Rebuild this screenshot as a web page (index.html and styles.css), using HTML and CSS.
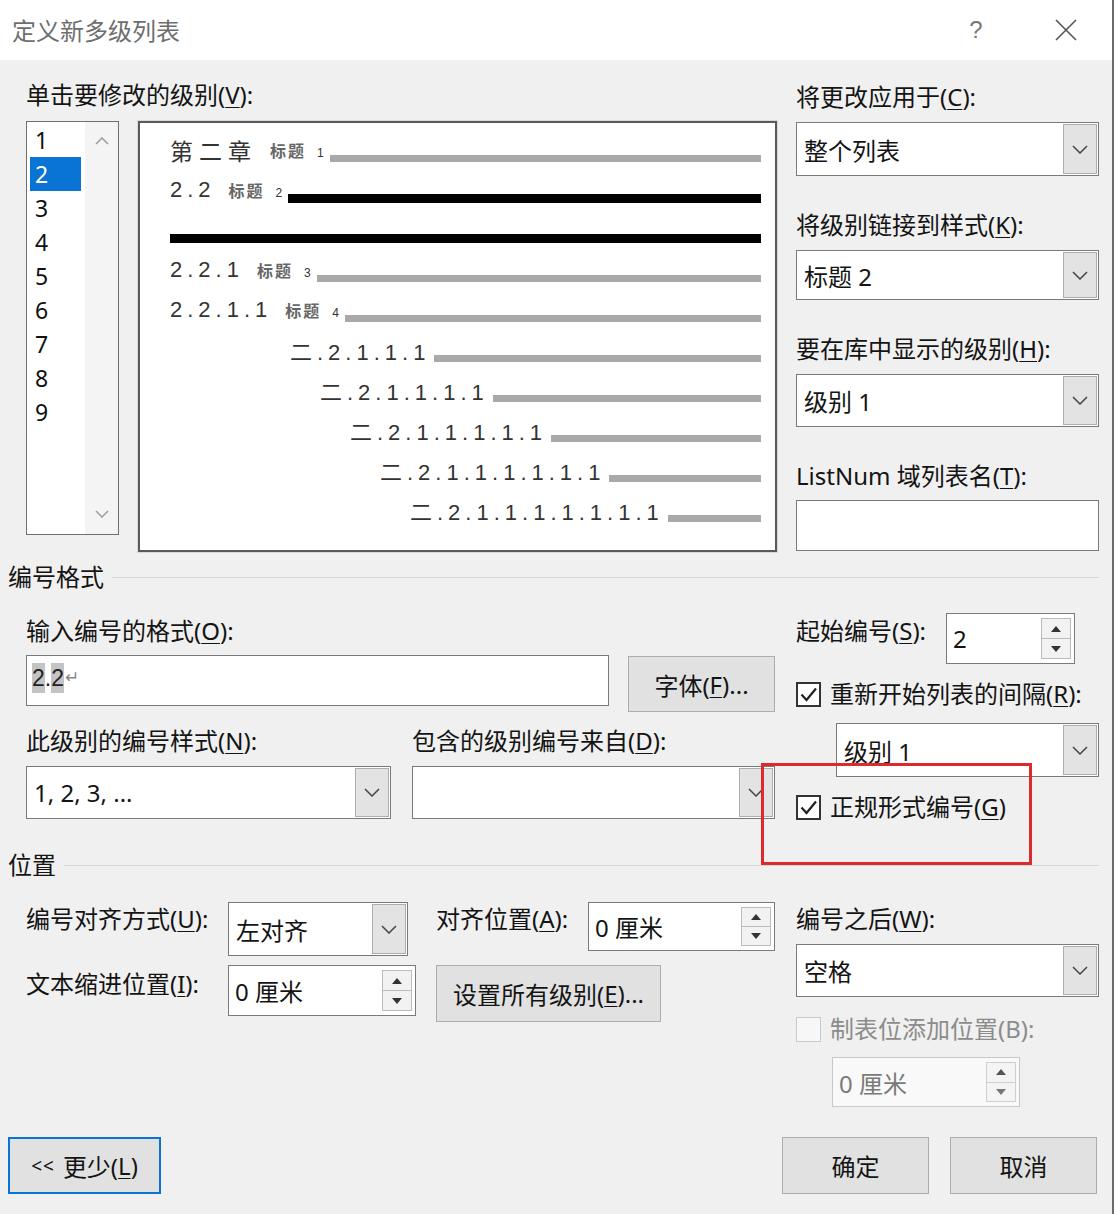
FILE: index.html
```html
<!DOCTYPE html>
<html lang="zh-CN">
<head>
<meta charset="utf-8">
<title>定义新多级列表</title>
<link rel="stylesheet" href="styles.css">
</head>
<body>
<div class="dialog">
  <header class="titlebar">
    <span class="title">定义新多级列表</span>
    <span class="help">?</span>
    <span class="close"><svg width="22" height="22" viewBox="0 0 22 22"><path d="M1 1L21 21M21 1L1 21" stroke="#555" stroke-width="1.6" fill="none"/></svg></span>
  </header>

  <main class="content">
    <section class="top">
      <div class="top-left">
        <div class="label">单击要修改的级别(<u>V</u>):</div>
        <div class="levels-row">
          <div class="listbox">
            <ul class="items">
              <li>1</li>
              <li class="sel">2</li>
              <li>3</li>
              <li>4</li>
              <li>5</li>
              <li>6</li>
              <li>7</li>
              <li>8</li>
              <li>9</li>
            </ul>
            <div class="vscroll">
              <svg width="14" height="8" viewBox="0 0 14 8"><path d="M1 7L7 1L13 7" stroke="#a0a0a0" stroke-width="1.6" fill="none"/></svg>
              <svg width="14" height="8" viewBox="0 0 14 8"><path d="M1 1L7 7L13 1" stroke="#a0a0a0" stroke-width="1.6" fill="none"/></svg>
            </div>
          </div>
          <div class="preview">
            <div class="prow"><span class="num cjk">第二章</span><span class="tag">标题<small>1</small></span><span class="bar"></span></div>
            <div class="prow"><span class="num">2.2</span><span class="tag">标题<small>2</small></span><span class="bar black"></span></div>
            <div class="prow"><span class="bar black full"></span></div>
            <div class="prow"><span class="num">2.2.1</span><span class="tag">标题<small>3</small></span><span class="bar"></span></div>
            <div class="prow"><span class="num">2.2.1.1</span><span class="tag">标题<small>4</small></span><span class="bar"></span></div>
            <div class="prow i5"><span class="num">二.2.1.1.1</span><span class="bar"></span></div>
            <div class="prow i6"><span class="num">二.2.1.1.1.1</span><span class="bar"></span></div>
            <div class="prow i7"><span class="num">二.2.1.1.1.1.1</span><span class="bar"></span></div>
            <div class="prow i8"><span class="num">二.2.1.1.1.1.1.1</span><span class="bar"></span></div>
            <div class="prow i9"><span class="num">二.2.1.1.1.1.1.1.1</span><span class="bar"></span></div>
          </div>
        </div>
      </div>

      <div class="top-right">
        <div class="label r1">将更改应用于(<u>C</u>):</div>
        <div class="combo rc1"><span class="val">整个列表</span><span class="drop"><svg width="16" height="9" viewBox="0 0 16 9"><path d="M1 1L8 8L15 1" stroke="#444" stroke-width="1.5" fill="none"/></svg></span></div>
        <div class="label r2">将级别链接到样式(<u>K</u>):</div>
        <div class="combo rc2"><span class="val">标题 2</span><span class="drop"><svg width="16" height="9" viewBox="0 0 16 9"><path d="M1 1L8 8L15 1" stroke="#444" stroke-width="1.5" fill="none"/></svg></span></div>
        <div class="label r2">要在库中显示的级别(<u>H</u>):</div>
        <div class="combo rc3"><span class="val">级别 1</span><span class="drop"><svg width="16" height="9" viewBox="0 0 16 9"><path d="M1 1L8 8L15 1" stroke="#444" stroke-width="1.5" fill="none"/></svg></span></div>
        <div class="label r2">ListNum 域列表名(<u>T</u>):</div>
        <div class="textbox rt4"></div>
      </div>
    </section>

    <div class="group g1">编号格式</div>

    <section class="fmt">
      <div class="fmt-left">
        <div class="label f1">输入编号的格式(<u>O</u>):</div>
        <div class="fmt-row1">
          <div class="textbox fmt-input"><span class="field">2</span>.<span class="field">2</span><span class="ret">↵</span></div>
          <button class="btn font-btn">字体(<u>F</u>)...</button>
        </div>
        <div class="fmt-labels">
          <div class="label fl-a">此级别的编号样式(<u>N</u>):</div>
          <div class="label">包含的级别编号来自(<u>D</u>):</div>
        </div>
        <div class="fmt-combos">
          <div class="combo style-combo"><span class="val">1, 2, 3, ...</span><span class="drop"><svg width="16" height="9" viewBox="0 0 16 9"><path d="M1 1L8 8L15 1" stroke="#444" stroke-width="1.5" fill="none"/></svg></span></div>
          <div class="combo from-combo"><span class="val"></span><span class="drop"><svg width="16" height="9" viewBox="0 0 16 9"><path d="M1 1L8 8L15 1" stroke="#444" stroke-width="1.5" fill="none"/></svg></span></div>
        </div>
      </div>
      <div class="fmt-right">
        <div class="start-row">
          <div class="label start-label">起始编号(<u>S</u>):</div>
          <div class="spin start-spin"><span class="val">2</span><span class="btns"><span class="sb"><svg width="10" height="6" viewBox="0 0 10 6"><path d="M0 6L5 0L10 6Z" fill="#333"/></svg></span><span class="sb"><svg width="10" height="6" viewBox="0 0 10 6"><path d="M0 0L5 6L10 0Z" fill="#333"/></svg></span></span></div>
        </div>
        <div class="check-row cr1"><span class="cbox"><svg width="21" height="21" viewBox="0 0 21 21"><path d="M3.5 10.5L8.5 16L18 4.5" stroke="#222" stroke-width="2.2" fill="none"/></svg></span><span class="ctext">重新开始列表的间隔(<u>R</u>):</span></div>
        <div class="combo restart-combo"><span class="val">级别 1</span><span class="drop"><svg width="16" height="9" viewBox="0 0 16 9"><path d="M1 1L8 8L15 1" stroke="#444" stroke-width="1.5" fill="none"/></svg></span></div>
        <div class="check-row cr2"><span class="cbox"><svg width="21" height="21" viewBox="0 0 21 21"><path d="M3.5 10.5L8.5 16L18 4.5" stroke="#222" stroke-width="2.2" fill="none"/></svg></span><span class="ctext">正规形式编号(<u>G</u>)</span></div>
      </div>
    </section>

    <div class="group g2">位置</div>

    <section class="pos">
      <div class="pos-left">
        <div class="pos-row pr1">
          <div class="label pl">编号对齐方式(<u>U</u>):</div>
          <div class="combo align-combo"><span class="val">左对齐</span><span class="drop"><svg width="16" height="9" viewBox="0 0 16 9"><path d="M1 1L8 8L15 1" stroke="#444" stroke-width="1.5" fill="none"/></svg></span></div>
          <div class="label pl2">对齐位置(<u>A</u>):</div>
          <div class="spin at-spin"><span class="val">0 厘米</span><span class="btns"><span class="sb"><svg width="10" height="6" viewBox="0 0 10 6"><path d="M0 6L5 0L10 6Z" fill="#333"/></svg></span><span class="sb"><svg width="10" height="6" viewBox="0 0 10 6"><path d="M0 0L5 6L10 0Z" fill="#333"/></svg></span></span></div>
        </div>
        <div class="pos-row pr2">
          <div class="label pl pl-b">文本缩进位置(<u>I</u>):</div>
          <div class="spin indent-spin"><span class="val">0 厘米</span><span class="btns"><span class="sb"><svg width="10" height="6" viewBox="0 0 10 6"><path d="M0 6L5 0L10 6Z" fill="#333"/></svg></span><span class="sb"><svg width="10" height="6" viewBox="0 0 10 6"><path d="M0 0L5 6L10 0Z" fill="#333"/></svg></span></span></div>
          <button class="btn all-btn">设置所有级别(<u>E</u>)...</button>
        </div>
      </div>
      <div class="pos-right">
        <div class="label after-label">编号之后(<u>W</u>):</div>
        <div class="combo after-combo"><span class="val">空格</span><span class="drop"><svg width="16" height="9" viewBox="0 0 16 9"><path d="M1 1L8 8L15 1" stroke="#444" stroke-width="1.5" fill="none"/></svg></span></div>
        <div class="check-row disabled cr3"><span class="cbox off"></span><span class="ctext">制表位添加位置(B):</span></div>
        <div class="spin tab-spin disabled"><span class="val">0 厘米</span><span class="btns"><span class="sb"><svg width="10" height="6" viewBox="0 0 10 6"><path d="M0 6L5 0L10 6Z" fill="#555"/></svg></span><span class="sb"><svg width="10" height="6" viewBox="0 0 10 6"><path d="M0 0L5 6L10 0Z" fill="#777"/></svg></span></span></div>
      </div>
    </section>

    <footer class="footer">
      <button class="btn less-btn"><span class="lt">&lt;&lt;</span> 更少(<u>L</u>)</button>
      <div class="footer-right">
        <button class="btn ok-btn">确定</button>
        <button class="btn ok-btn">取消</button>
      </div>
    </footer>
  </main>

  <div class="annot"></div>
</div>
</body>
</html>
```

FILE: styles.css
```css
* { box-sizing: border-box; }

html, body {
  margin: 0;
  padding: 0;
  background: #ffffff;
}

body {
  font-family: "Noto Sans", "Noto Sans CJK SC", sans-serif;
  font-size: 24px;
  color: #141414;
}

.dialog {
  position: relative;
  width: 1114px;
  height: 1214px;
  background: #f0f0f0;
  border-right: 2px solid #6a6a6a;
  overflow: hidden;
}

/* Title bar */
.titlebar {
  height: 60px;
  background: #ffffff;
  display: flex;
  align-items: center;
  padding: 0 35px 0 12px;
}
.title {
  font-family: "Noto Sans CJK SC", sans-serif;
  font-size: 24px;
  color: #6e6e6e;
  line-height: 30px;
}
.help {
  margin-left: auto;
  width: 24px;
  text-align: center;
  font-family: "Liberation Sans", sans-serif;
  font-size: 24px;
  color: #777;
}
.close {
  margin-left: 67px;
  display: flex;
}

/* Content */
.content {
  padding: 0 13px 0 26px;
}

.label {
  line-height: 30px;
  height: 30px;
  white-space: nowrap;
  font-family: "Noto Sans", "Noto Sans CJK SC", sans-serif;
}
u { text-decoration-thickness: 1px; text-underline-offset: 3px; }

/* Top section */
.top {
  display: flex;
  gap: 19px;
  padding-top: 20px;
}
.top-left { width: 751px; }
.top-right { width: 303px; display: flex; flex-direction: column; }

.levels-row {
  display: flex;
  gap: 19px;
  margin-top: 11px;
  align-items: flex-start;
}

.listbox {
  width: 93px;
  height: 414px;
  background: #fff;
  border: 1px solid #6f6f6f;
  display: flex;
}
.items {
  list-style: none;
  margin: 0;
  padding: 1px 0 0 0;
  width: 58px;
}
.items li {
  height: 34px;
  line-height: 34px;
  margin-left: 3px;
  width: 51px;
  padding-left: 5px;
  font-size: 23px;
  color: #111;
}
.items li.sel {
  background: #0a74d4;
  color: #fff;
}
.vscroll {
  flex: 1;
  background: #f4f4f4;
  display: flex;
  flex-direction: column;
  justify-content: space-between;
  align-items: center;
  padding: 15px 0 16px;
}

.preview {
  width: 639px;
  height: 431px;
  background: #fff;
  border: 2px solid #5a5a5a;
  box-shadow: 0 0 0 1px #d8d8d8;
  padding: 7px 14px 0 30px;
}
.prow {
  display: flex;
  align-items: center;
  height: 40px;
}
.num {
  font-family: "Liberation Sans", "Noto Sans CJK SC", sans-serif;
  font-size: 22px;
  letter-spacing: 5px;
  color: #333;
  white-space: nowrap;
}
.num.cjk {
  font-family: "Noto Sans CJK SC", sans-serif;
  font-size: 23px;
  letter-spacing: 6px;
}
.tag {
  font-family: "Noto Sans CJK SC", sans-serif;
  font-size: 16px;
  font-weight: 700;
  color: #666;
  letter-spacing: 2px;
  margin-left: 13px;
  white-space: nowrap;
}
.tag small {
  font-family: "Liberation Sans", sans-serif;
  font-size: 12px;
  font-weight: 400;
  margin-left: 11px;
  color: #333;
}
.bar {
  flex: 1;
  height: 7px;
  margin-top: 16px;
  margin-left: 4px;
  background: #a9a9a9;
}
.bar.black {
  height: 9px;
  margin-top: 17px;
  background: #000;
}
.bar.full { margin-left: 0; }
.i5 { padding-left: 120px; }
.i6 { padding-left: 150px; }
.i7 { padding-left: 180px; }
.i8 { padding-left: 210px; }
.i9 { padding-left: 240px; }

/* Right column of top */
.r1 { margin-top: 2px; }
.r2 { margin-top: 34px; }
.rc1 { margin-top: 10px; height: 54px; }
.rc2 { margin-top: 10px; height: 50px; }
.rc3 { margin-top: 10px; height: 53px; }
.rt4 { margin-top: 9px; height: 51px; }

/* Controls */
.combo {
  display: flex;
  background: #fff;
  border: 1px solid #7a7a7a;
}
.combo .val {
  flex: 1;
  display: flex;
  align-items: center;
  padding-left: 7px;
  white-space: nowrap;
}
.combo .drop {
  width: 34px;
  margin: 1px;
  background: #e3e3e3;
  border: 1px solid #adadad;
  display: flex;
  align-items: center;
  justify-content: center;
}

.textbox {
  background: #fff;
  border: 1px solid #7a7a7a;
}

.spin {
  display: flex;
  background: #fff;
  border: 1px solid #7a7a7a;
}
.spin .val {
  flex: 1;
  display: flex;
  align-items: center;
  padding-left: 6px;
  white-space: nowrap;
}
.spin .btns {
  width: 30px;
  margin: 4px 3px 4px 0;
  display: flex;
  flex-direction: column;
}
.spin .sb {
  flex: 1;
  background: #f2f2f2;
  border: 1px solid #bcbcbc;
  display: flex;
  align-items: center;
  justify-content: center;
}
.spin .sb + .sb { border-top: none; }

.btn {
  font-family: "Noto Sans", "Noto Sans CJK SC", sans-serif;
  font-size: 24px;
  color: #141414;
  background: #e1e1e1;
  border: 1px solid #adadad;
  padding: 0;
  display: flex;
  align-items: center;
  justify-content: center;
  white-space: nowrap;
}

.check-row {
  display: flex;
  align-items: center;
  gap: 9px;
  height: 30px;
}
.cbox {
  width: 25px;
  height: 25px;
  border: 2px solid #333;
  background: #fff;
  display: flex;
  align-items: center;
  justify-content: center;
}
.cbox.off {
  border: 1px solid #c9c9c9;
  background: #f7f7f7;
}
.ctext { white-space: nowrap; line-height: 30px; }
.disabled .ctext { color: #8c8c8c; }

/* Group headers */
.group {
  display: flex;
  align-items: center;
  gap: 8px;
  margin-left: -18px;
  height: 30px;
  line-height: 30px;
  white-space: nowrap;
}
.group::after {
  content: "";
  flex: 1;
  height: 1px;
  background: #d6d6d6;
}
.g1 { margin-top: 10px; }
.g2 { margin-top: 28px; }

/* Format section */
.fmt {
  display: flex;
  gap: 19px;
}
.fmt-left { width: 751px; }
.fmt-right { width: 303px; display: flex; flex-direction: column; }
.f1 { margin-top: 24px; }
.fmt-row1 {
  display: flex;
  gap: 19px;
  margin-top: 9px;
  align-items: flex-start;
}
.fmt-input {
  width: 583px;
  height: 51px;
  display: flex;
  align-items: flex-start;
  padding: 7px 0 0 5px;
  font-family: "Liberation Sans", sans-serif;
  font-size: 23px;
  line-height: 30px;
  color: #222;
}
.field {
  background: #c4c4c4;
}
.ret {
  font-size: 17px;
  color: #888;
  margin-left: 1px;
}
.font-btn {
  width: 147px;
  height: 56px;
  margin-top: 1px;
}
.fmt-labels {
  display: flex;
  margin-top: 14px;
}
.fl-a { width: 386px; }
.fmt-combos {
  display: flex;
  gap: 21px;
  margin-top: 10px;
}
.style-combo { width: 365px; height: 53px; }
.from-combo { width: 363px; height: 53px; }

.start-row {
  display: flex;
  align-items: flex-start;
  margin-top: 21px;
}
.start-label { width: 150px; margin-top: 3px; }
.start-spin { width: 129px; height: 51px; }
.cr1 { margin-top: 15px; }
.restart-combo { margin-top: 14px; margin-left: 40px; width: 263px; height: 54px; }
.cr2 { margin-top: 15px; }

/* Position section */
.pos {
  display: flex;
  gap: 19px;
}
.pos-left { width: 751px; }
.pos-right { width: 303px; display: flex; flex-direction: column; }
.pos-row {
  display: flex;
  align-items: flex-start;
}
.pr1 { margin-top: 22px; }
.pr2 { margin-top: 9px; }
.pl { width: 202px; margin-top: 2px; }
.pl-b { margin-top: 4px; }
.align-combo { width: 180px; height: 54px; }
.pl2 { width: 152px; margin-left: 28px; margin-top: 2px; }
.at-spin { width: 187px; height: 49px; }
.indent-spin { width: 188px; height: 51px; }
.all-btn { width: 225px; height: 57px; margin-left: 20px; }

.after-label { margin-top: 24px; }
.after-combo { margin-top: 10px; height: 53px; }
.cr3 { margin-top: 17px; }
.tab-spin {
  margin-top: 13px;
  margin-left: 36px;
  width: 188px;
  height: 50px;
  border-color: #c8c8c8;
  background: #f9f9f9;
}
.tab-spin .val { color: #7a7a7a; }
.tab-spin .sb { background: #f4f4f4; border-color: #cfcfcf; }

/* Footer */
.footer {
  display: flex;
  margin-top: 30px;
  margin-left: -18px;
  margin-right: 2px;
}
.less-btn {
  width: 153px;
  height: 57px;
  border: 2px solid #0a74d4;
}
.less-btn .lt {
  font-size: 19px;
  letter-spacing: 1px;
  margin-right: 8px;
}
.footer-right {
  margin-left: auto;
  display: flex;
  gap: 21px;
}
.ok-btn { width: 147px; height: 57px; }

/* Annotation overlay */
.annot {
  position: absolute;
  left: 761px;
  top: 763px;
  width: 271px;
  height: 102px;
  border: 3px solid #dd2a2a;
  pointer-events: none;
}
```
